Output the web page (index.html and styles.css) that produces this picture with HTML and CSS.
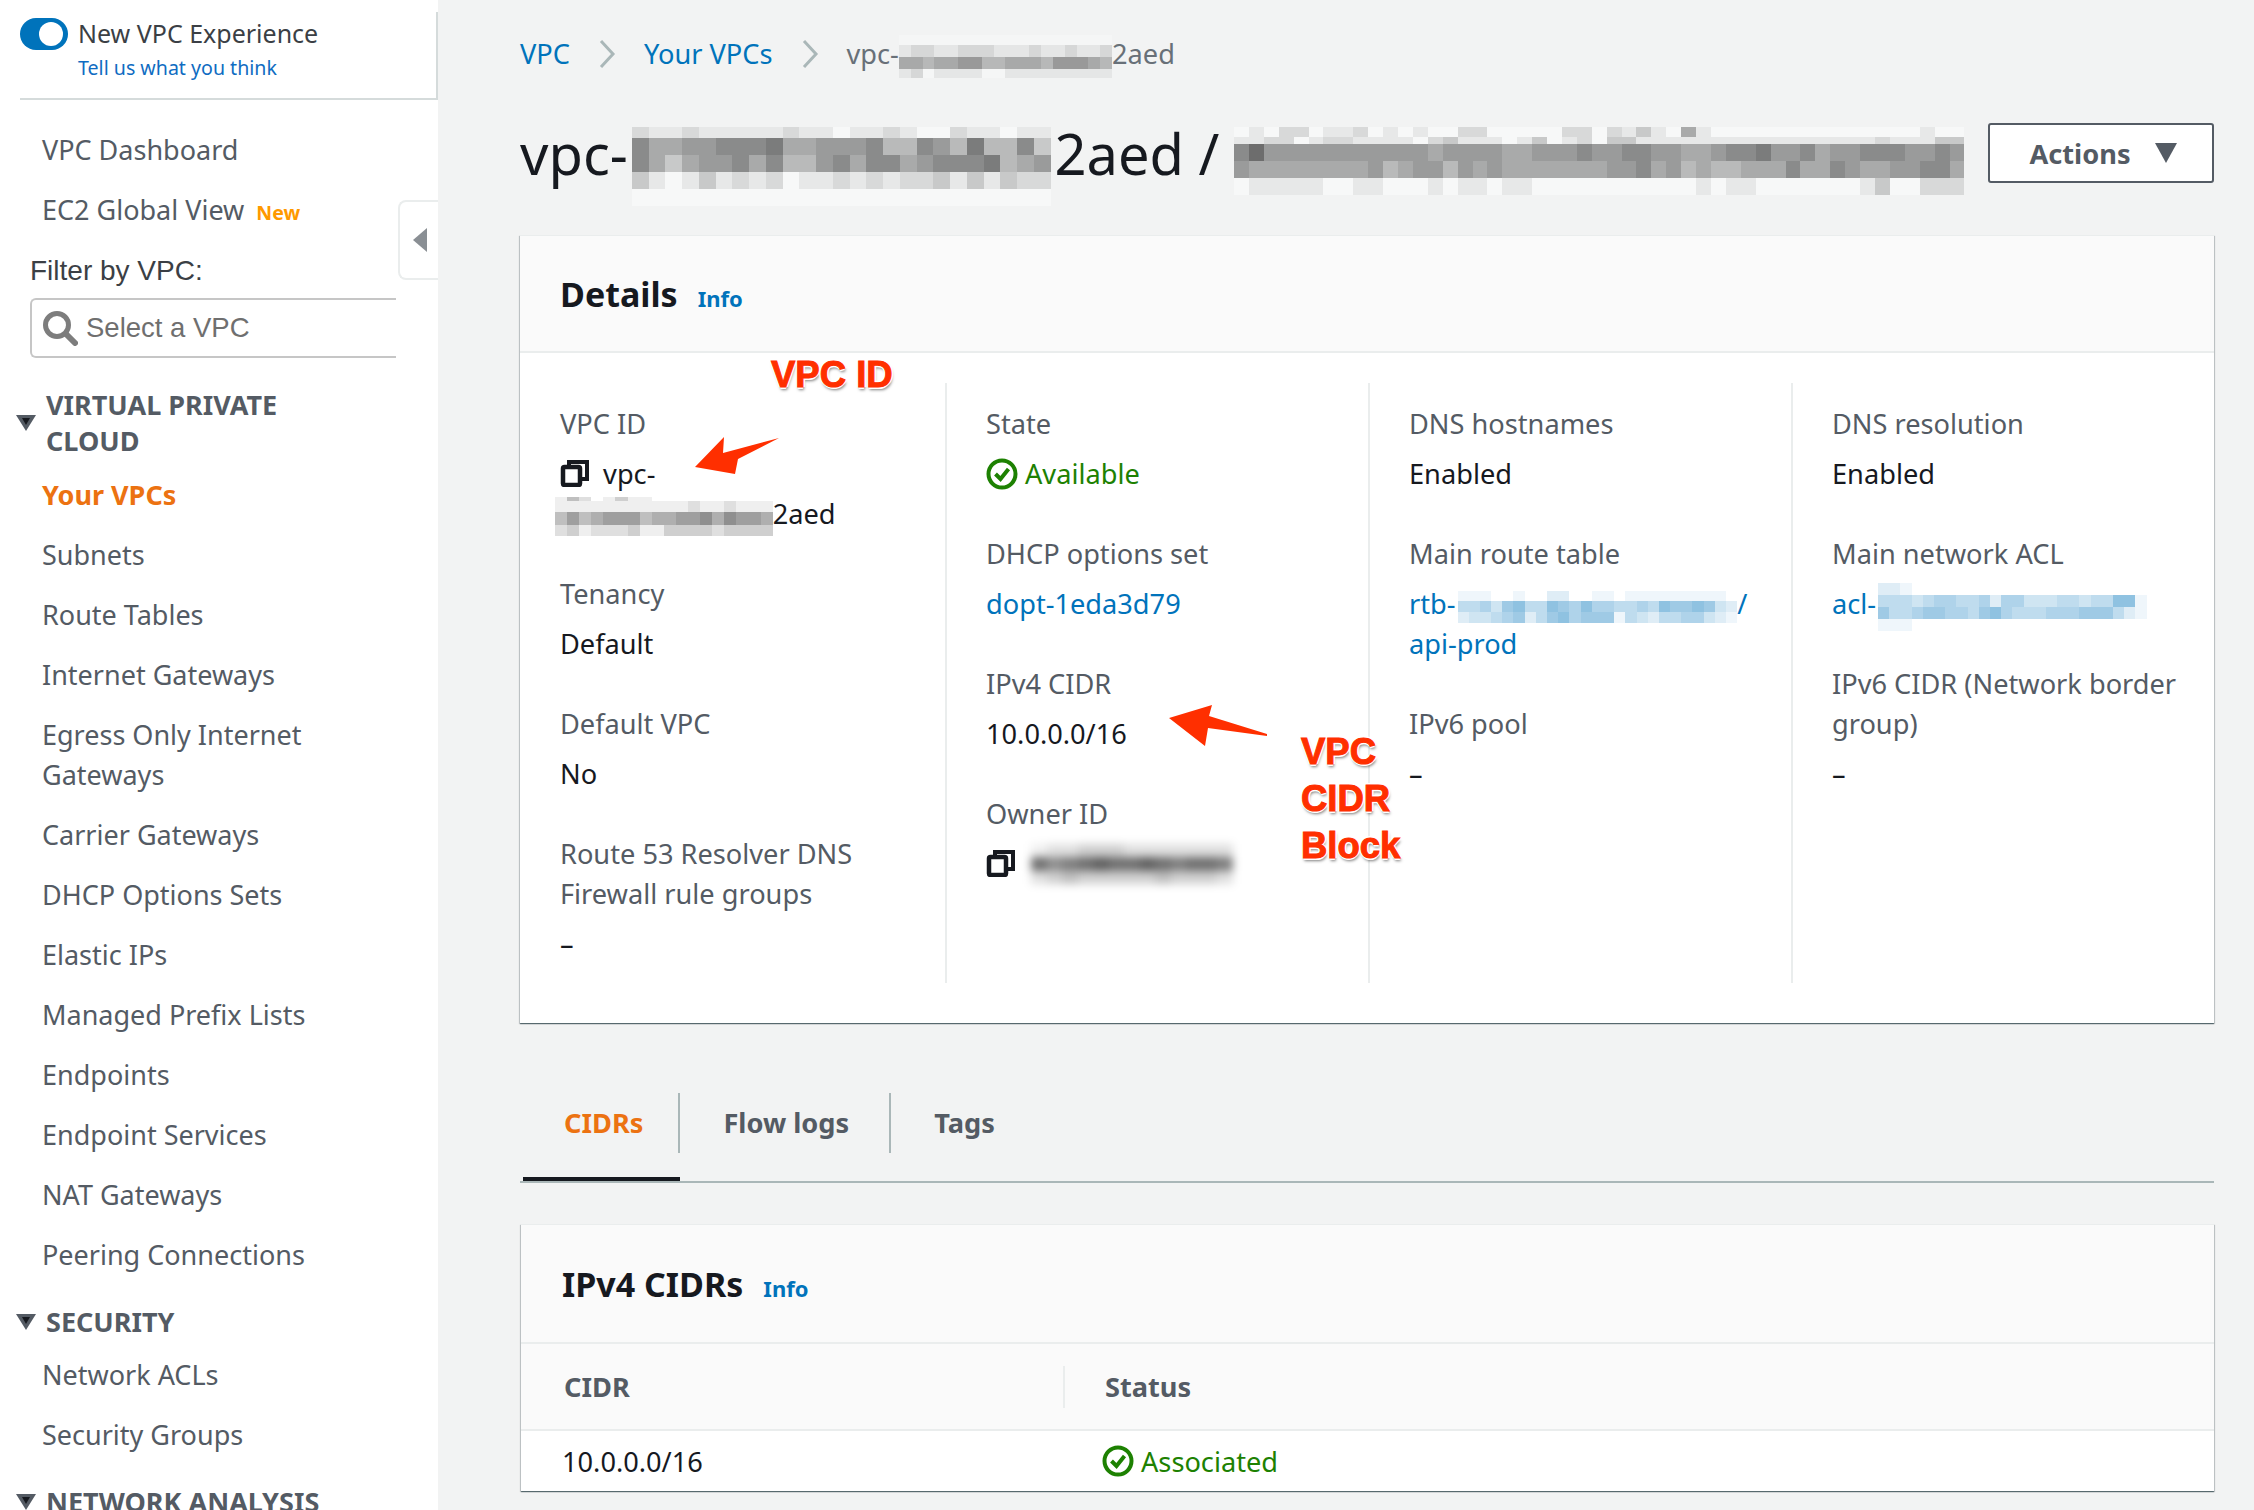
FILE: index.html
```html
<!DOCTYPE html>
<html lang="en">
<head>
    <meta charset="UTF-8">
    <title>VPC details</title>
    <link rel="stylesheet" href="styles.css">
</head>

<body>
    <div id="pagina">
        <aside id="sidebar">
            <div id="sidebar-top">
                <div class="toggle-row">
                    <span class="toggle"><span class="toggle-knob"></span></span>
                    <div>
                        <p class="toggle-title">New VPC Experience</p>
                        <a class="toggle-link">Tell us what you think</a>
                    </div>
                </div>
            </div>

            <button id="collapse" type="button" aria-label="Collapse">
                <svg width="14" height="24" viewBox="0 0 14 24"><path d="M14 0V24L0 12Z" fill="#8a8f94"/></svg>
            </button>

            <nav id="nav">
                <a class="nav-item">VPC Dashboard</a>
                <a class="nav-item">EC2 Global View <span class="nav-new">New</span></a>

                <p class="filter-label">Filter by VPC:</p>
                <div class="filter-box">
                    <svg width="36" height="36" viewBox="0 0 36 36">
                        <circle cx="15" cy="15" r="11.5" fill="#fff" stroke="#7d7d7d" stroke-width="5"/>
                        <path d="M24 24L33 33" stroke="#7d7d7d" stroke-width="6" stroke-linecap="round"/>
                    </svg>
                    <span>Select a VPC</span>
                </div>

                <div class="nav-section nav-section-first">
                    <svg class="caret" width="20" height="16" viewBox="0 0 20 16"><path d="M0 0H20L10 16Z" fill="#545b64"/><path d="M6 3H14L10 10Z" fill="#16191f"/></svg>
                    <span>VIRTUAL PRIVATE<br>CLOUD</span>
                </div>
                <a class="nav-item nav-active">Your VPCs</a>
                <a class="nav-item">Subnets</a>
                <a class="nav-item">Route Tables</a>
                <a class="nav-item">Internet Gateways</a>
                <a class="nav-item">Egress Only Internet<br>Gateways</a>
                <a class="nav-item">Carrier Gateways</a>
                <a class="nav-item">DHCP Options Sets</a>
                <a class="nav-item">Elastic IPs</a>
                <a class="nav-item">Managed Prefix Lists</a>
                <a class="nav-item">Endpoints</a>
                <a class="nav-item">Endpoint Services</a>
                <a class="nav-item">NAT Gateways</a>
                <a class="nav-item">Peering Connections</a>

                <div class="nav-section">
                    <svg class="caret" width="20" height="16" viewBox="0 0 20 16"><path d="M0 0H20L10 16Z" fill="#545b64"/><path d="M6 3H14L10 10Z" fill="#16191f"/></svg>
                    <span>SECURITY</span>
                </div>
                <a class="nav-item">Network ACLs</a>
                <a class="nav-item">Security Groups</a>

                <div class="nav-section">
                    <svg class="caret" width="20" height="16" viewBox="0 0 20 16"><path d="M0 0H20L10 16Z" fill="#545b64"/><path d="M6 3H14L10 10Z" fill="#16191f"/></svg>
                    <span>NETWORK ANALYSIS</span>
                </div>
            </nav>
        </aside>

        <main id="contenuto">
            <div id="breadcrumb">
                <a>VPC</a>
                <svg class="crumb-sep" width="18" height="30" viewBox="0 0 18 30"><path d="M3 2L15 15L3 28" fill="none" stroke="#aab7b8" stroke-width="3"/></svg>
                <a>Your VPCs</a>
                <svg class="crumb-sep" width="18" height="30" viewBox="0 0 18 30"><path d="M3 2L15 15L3 28" fill="none" stroke="#aab7b8" stroke-width="3"/></svg>
                <span class="crumb-now">vpc-<span class="mosaic mosaic-crumb" data-cell="11.85" data-h="10,12,12,9" data-rows="000000000000000000 122112221112112112 554556644555466654 120111100111111111"></span>2aed</span>
            </div>

            <div id="titolo">
                <h1>vpc-<span class="mosaic mosaic-title" data-cell="16.76" data-h="11,17,17,17,17" data-rows="2112111112110112100211011 7556677785566674476484473 7535667574467577567778456 3101312120112121223131322 0000000000000000000000000"></span>2aed / <span class="mosaic mosaic-name" data-cell="14.92" data-h="10,7,17,17,17" data-rows="0102201120101002200000220213105100000000000000100 1122012211110231110130120331111111111111111211133 7966666666666566665566676677665567786675667776676 6555555556456646565555555667564544555755765566775 0111110011000101101100000000000101100000001300222"></span></h1>
                <button id="azioni" type="button">Actions
                    <svg width="22" height="20" viewBox="0 0 22 20"><path d="M0 0H22L11 20Z" fill="#545b64"/></svg>
                </button>
            </div>

            <section class="card">
                <header class="card-head">
                    <h2>Details</h2>
                    <a class="info">Info</a>
                </header>
                <div class="griglia">
                    <div class="colonna">
                        <div class="campo">
                            <p class="etichetta">VPC ID</p>
                            <p class="valore valore-wrap">
                                <svg class="copia" width="30" height="28" viewBox="0 0 30 28"><path d="M9 7V3H27V20H21" fill="none" stroke="#16191f" stroke-width="4"/><rect x="3" y="8" width="17" height="18" rx="1.5" fill="none" stroke="#16191f" stroke-width="4.5"/></svg>
                                vpc-<br><span class="mosaic mosaic-id" data-cell="12.1" data-h="4,11,13,11" data-rows="142013110000000000 111111111112112111 464566645566757665 231222311333323333"></span>2aed
                            </p>
                        </div>
                        <div class="campo">
                            <p class="etichetta">Tenancy</p>
                            <p class="valore">Default</p>
                        </div>
                        <div class="campo">
                            <p class="etichetta">Default VPC</p>
                            <p class="valore">No</p>
                        </div>
                        <div class="campo">
                            <p class="etichetta">Route 53 Resolver DNS<br>Firewall rule groups</p>
                            <p class="valore">–</p>
                        </div>
                    </div>

                    <div class="colonna">
                        <div class="campo">
                            <p class="etichetta">State</p>
                            <p class="valore stato">
                                <svg class="ok" width="32" height="32" viewBox="0 0 32 32"><circle cx="16" cy="16" r="13.5" fill="none" stroke="#1d8102" stroke-width="4"/><path d="M9.5 16L14.5 21L22.5 11" fill="none" stroke="#1d8102" stroke-width="4"/></svg>
                                Available
                            </p>
                        </div>
                        <div class="campo">
                            <p class="etichetta">DHCP options set</p>
                            <p class="valore"><a>dopt-1eda3d79</a></p>
                        </div>
                        <div class="campo">
                            <p class="etichetta">IPv4 CIDR</p>
                            <p class="valore">10.0.0.0/16</p>
                        </div>
                        <div class="campo">
                            <p class="etichetta">Owner ID</p>
                            <p class="valore">
                                <svg class="copia" width="30" height="28" viewBox="0 0 30 28"><path d="M9 7V3H27V20H21" fill="none" stroke="#16191f" stroke-width="4"/><rect x="3" y="8" width="17" height="18" rx="1.5" fill="none" stroke="#16191f" stroke-width="4.5"/></svg>
                                <span class="mosaic mosaic-owner" data-cell="15.5" data-h="13,14,13" data-rows="1223332222222 9789a99a98998 2343333343332"></span>
                            </p>
                        </div>
                    </div>

                    <div class="colonna">
                        <div class="campo">
                            <p class="etichetta">DNS hostnames</p>
                            <p class="valore">Enabled</p>
                        </div>
                        <div class="campo">
                            <p class="etichetta">Main route table</p>
                            <p class="valore"><a>rtb-<span class="mosaic mosaic-rtb" data-cell="11.2" data-h="10,11,11" data-rows="1110010022001101111111110 4453674476575544547667632 2334562467566614324455321"></span>/<br>api-prod</a></p>
                        </div>
                        <div class="campo">
                            <p class="etichetta">IPv6 pool</p>
                            <p class="valore">–</p>
                        </div>
                    </div>

                    <div class="colonna">
                        <div class="campo">
                            <p class="etichetta">DNS resolution</p>
                            <p class="valore">Enabled</p>
                        </div>
                        <div class="campo">
                            <p class="etichetta">Main network ACL</p>
                            <p class="valore"><a>acl-<span class="mosaic mosaic-acl" data-cell="11.2" data-h="12,12,12,12" data-rows="221000000000000000000000 444345544525533344344771 644566554675444555666421 111000000000000000000000"></span></a></p>
                        </div>
                        <div class="campo">
                            <p class="etichetta">IPv6 CIDR (Network border<br>group)</p>
                            <p class="valore">–</p>
                        </div>
                    </div>
                </div>
            </section>

            <div id="tabs">
                <a class="tab tab-active"><span>CIDRs</span></a>
                <a class="tab"><span>Flow logs</span></a>
                <a class="tab tab-last"><span>Tags</span></a>
            </div>

            <section class="card card-tabella">
                <header class="card-head">
                    <h2>IPv4 CIDRs</h2>
                    <a class="info">Info</a>
                </header>
                <div class="riga-head">
                    <div class="cella-cidr">CIDR</div>
                    <div class="cella-status">Status</div>
                </div>
                <div class="riga">
                    <div class="cella-cidr">10.0.0.0/16</div>
                    <div class="cella-status stato">
                        <svg class="ok" width="32" height="32" viewBox="0 0 32 32"><circle cx="16" cy="16" r="13.5" fill="none" stroke="#1d8102" stroke-width="4"/><path d="M9.5 16L14.5 21L22.5 11" fill="none" stroke="#1d8102" stroke-width="4"/></svg>
                        Associated
                    </div>
                </div>
            </section>
        </main>

        <!-- annotazioni sopra lo screenshot -->
        <div class="nota nota-id">VPC ID</div>
        <div class="nota nota-cidr">VPC<br>CIDR<br>Block</div>
        <svg class="freccia freccia-id" width="90" height="44" viewBox="0 0 90 44"><path d="M1 31L30 1L29 17L85 2L44 23L41 38Z" fill="#ff2f00"/></svg>
        <svg class="freccia freccia-cidr" width="100" height="44" viewBox="0 0 100 44"><path d="M1 14L44 1L41 12L99 30V32L40 24L37 42Z" fill="#ff2f00"/></svg>
    </div>
    <script src="mosaic.js"></script>
</body>
</html>
```

FILE: styles.css
```css
* {
    box-sizing: border-box;
}

html, body {
    margin: 0;
    height: 100%;
}

body {
    font-family: "Noto Sans", Arial, sans-serif;
    font-size: 27.2px;
    background-color: #f2f3f3;
    color: #16191f;
    overflow: hidden;
}

p, h1, h2 {
    margin: 0;
}

#pagina {
    position: relative;
    display: flex;
    height: 1510px;
    overflow: hidden;
}

/* sidebar */

#sidebar {
    position: relative;
    flex: none;
    width: 438px;
    background-color: #ffffff;
}

#sidebar-top {
    height: 100px;
    margin-left: 20px;
    padding-top: 16px;
    border-bottom: 2px solid #d5dbdb;
    background: linear-gradient(#d5dbdb, #d5dbdb) no-repeat right 12px / 2px 88px;
}

.toggle-row {
    display: flex;
    gap: 10px;
}

.toggle {
    flex: none;
    display: flex;
    justify-content: flex-end;
    align-items: center;
    width: 48px;
    height: 32px;
    margin-top: 2px;
    padding-right: 5px;
    border-radius: 16px;
    background-color: #0073bb;
}

.toggle-knob {
    width: 24px;
    height: 24px;
    border-radius: 50%;
    background-color: #ffffff;
}

.toggle-title {
    font-size: 25px;
    line-height: 34px;
    color: #3b3f45;
}

.toggle-link {
    display: block;
    font-size: 19.6px;
    line-height: 36px;
    color: #0f6cc2;
}

#collapse {
    position: absolute;
    top: 200px;
    left: 398px;
    width: 40px;
    height: 80px;
    padding: 2px 0 0 13px;
    background-color: #ffffff;
    border: 2px solid #eaeded;
    border-right: 0;
    border-radius: 8px 0 0 8px;
    text-align: left;
}

#nav {
    padding-top: 20px;
    font-size: 27px;
}

.nav-item {
    display: block;
    padding: 10px 0 10px 42px;
    line-height: 40px;
    color: #545b64;
}

.nav-new {
    margin-left: 5px;
    font-size: 19.5px;
    font-weight: bold;
    color: #ff9900;
}

.nav-active {
    font-weight: bold;
    color: #ec7211;
}

.filter-label {
    margin: 8px 0 0 30px;
    font-family: "Liberation Sans", Arial, sans-serif;
    font-size: 28px;
    line-height: 40px;
    color: #3b3f45;
}

.filter-box {
    display: flex;
    align-items: center;
    gap: 8px;
    width: 366px;
    height: 60px;
    margin: 7px 0 0 30px;
    padding-left: 10px;
    border: 2px solid #c6c6c6;
    border-right: 0;
    border-radius: 6px 0 0 6px;
    font-family: "Liberation Sans", Arial, sans-serif;
    font-size: 27.5px;
    color: #6f6f6f;
}

.nav-section {
    display: flex;
    align-items: center;
    gap: 10px;
    margin: 19px 0 5px 16px;
    font-weight: bold;
    line-height: 36px;
    color: #545b64;
}

.nav-section-first {
    margin-top: 29px;
    margin-bottom: 6px;
}

.caret {
    flex: none;
}

/* contenuto */

#contenuto {
    flex: 1;
    min-width: 0;
    padding: 0 40px 0 82px;
}

a {
    color: #0073bb;
}

#breadcrumb {
    display: flex;
    align-items: center;
    height: 107px;
    white-space: nowrap;
}

.crumb-sep {
    margin: 0 28px;
}

.crumb-now {
    color: #687078;
}

#titolo {
    display: flex;
    align-items: center;
    height: 60px;
    margin-top: 16px;
}

#titolo h1 {
    font-size: 56px;
    font-weight: normal;
    line-height: 60px;
    white-space: nowrap;
}

#azioni {
    flex: none;
    display: flex;
    align-items: center;
    justify-content: center;
    gap: 24px;
    width: 226px;
    height: 60px;
    margin-left: auto;
    padding-left: 10px;
    background-color: #ffffff;
    border: 2px solid #545b64;
    border-radius: 3px;
    font-family: inherit;
    font-size: 27.2px;
    font-weight: bold;
    color: #545b64;
}

/* mosaici delle parti oscurate */

.mosaic {
    display: inline-block;
    vertical-align: middle;
    color: #000000;
}

.mosaic-row {
    display: flex;
}

.mosaic-row i {
    display: block;
    background-color: currentColor;
}

.mosaic-title {
    margin: -23px 4px -37px 4px;
    background-color: #f7f8f8;
}

.mosaic-name {
    margin: -29px 0 -31px 0;
    background-color: #f7f8f8;
}

.mosaic-crumb {
    margin: -20px 0;
    background-color: #f5f6f6;
}

.mosaic-id {
    margin: -20px 0 -20px -5px;
}

.mosaic-owner {
    margin: -22px 0 -16px 2px;
    filter: blur(4px);
}

.mosaic-rtb, .mosaic-acl {
    margin: -20px 0 -20px 2px;
    color: #0073bb;
}

/* card */

.card {
    margin-top: 52px;
    background-color: #ffffff;
    border-top: 1px solid #eaeded;
    box-shadow: 0 1px 1px 0 rgba(0, 28, 36, 0.5), 1px 1px 1px 0 rgba(0, 28, 36, 0.15), -1px 1px 1px 0 rgba(0, 28, 36, 0.15);
}

.card-head {
    display: flex;
    align-items: baseline;
    gap: 20px;
    height: 117px;
    padding: 35px 0 0 40px;
    background-color: #fafafa;
    border-bottom: 2px solid #eaeded;
}

.card-head h2 {
    font-size: 34px;
    line-height: 46px;
}

.info {
    font-size: 22px;
    font-weight: bold;
}

.griglia {
    display: grid;
    grid-template-columns: repeat(4, 423px);
    padding: 30px 0 40px 2px;
}

.colonna {
    height: 600px;
    padding: 21px 0 0 39px;
    border-left: 2px solid #eaeded;
}

.colonna:first-child {
    padding-left: 38px;
    border-left: 0;
}

.campo {
    margin-bottom: 40px;
}

.etichetta {
    margin-bottom: 10px;
    line-height: 40px;
    color: #545b64;
}

.valore {
    line-height: 40px;
}

.copia {
    vertical-align: -3px;
    margin-right: 6px;
}

.stato {
    display: flex;
    align-items: center;
    gap: 7px;
    color: #1d8102;
}

.ok {
    flex: none;
}

/* tabs */

#tabs {
    display: flex;
    height: 90px;
    margin-top: 70px;
    padding-left: 3px;
    border-bottom: 2px solid #aab7b8;
}

.tab {
    height: 88px;
    border-bottom: 4px solid transparent;
    font-weight: bold;
    color: #545b64;
}

.tab span {
    display: block;
    height: 60px;
    padding: 0 40px 0 43px;
    line-height: 60px;
    border-right: 2px solid #aab7b8;
}

.tab-last span {
    border-right: 0;
}

.tab-active {
    border-bottom-color: #16191f;
    color: #ec7211;
}

.tab-active span {
    padding: 0 35px 0 41px;
}

/* tabella */

.card-tabella {
    margin-top: 41px;
    margin-left: 1px;
}

.card-tabella .card-head {
    height: 119px;
    padding: 36px 0 0 41px;
}

.riga-head, .riga {
    display: grid;
    grid-template-columns: 542px 1fr;
    align-items: center;
}

.riga-head {
    height: 87px;
    background-color: #fafafa;
    border-bottom: 2px solid #eaeded;
    font-weight: bold;
    color: #545b64;
}

.riga-head .cella-cidr {
    padding-left: 43px;
}

.riga {
    height: 60px;
}

.cella-cidr {
    padding-left: 41px;
}

.riga-head .cella-status {
    padding-left: 40px;
    line-height: 42px;
    border-left: 2px solid #eaeded;
}

.riga .cella-status {
    padding-left: 39px;
}

/* annotazioni */

.nota {
    position: absolute;
    font-family: "Liberation Sans", Arial, sans-serif;
    font-size: 36.5px;
    font-weight: bold;
    line-height: 47px;
    color: #ff2f00;
    -webkit-text-stroke: 1px #ff2f00;
    text-shadow: -2px 0 0 #fff, 2px 0 0 #fff, 0 -2px 0 #fff, 0 2px 0 #fff, 1px 3px 3px rgba(0, 0, 0, 0.5);
}

.nota-id {
    top: 351px;
    left: 771px;
}

.nota-cidr {
    top: 728px;
    left: 1301px;
}

.freccia {
    position: absolute;
}

.freccia-id {
    top: 436px;
    left: 694px;
}

.freccia-cidr {
    top: 704px;
    left: 1168px;
}
```

FILE: mosaic.js
```js
// disegna i blocchi pixelati a partire dai dati nei data-attribute
document.querySelectorAll(".mosaic").forEach(function (mosaic) {
    const larghezza = mosaic.dataset.cell;
    const altezze = mosaic.dataset.h.split(",");

    mosaic.dataset.rows.split(" ").forEach(function (riga, i) {
        const row = document.createElement("div");
        row.className = "mosaic-row";

        for (const c of riga) {
            const cella = document.createElement("i");
            cella.style.width = larghezza + "px";
            cella.style.height = altezze[i] + "px";
            cella.style.opacity = parseInt(c, 16) / 16;
            row.appendChild(cella);
        }

        mosaic.appendChild(row);
    });
});
```
